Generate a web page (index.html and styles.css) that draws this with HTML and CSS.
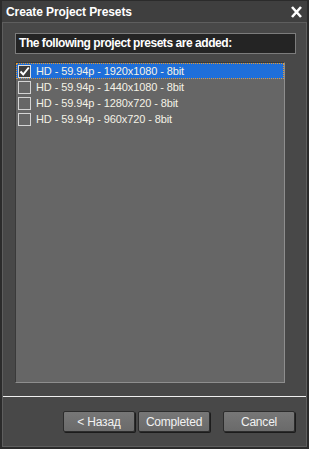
FILE: index.html
```html
<!DOCTYPE html>
<html>
<head>
    <link rel="stylesheet" href="styles.css">
</head>
<body>
    <div class="cpp-window">
        <div class="cpp-titlebar">
            <span class="cpp-title">Create Project Presets</span>
            <svg class="cpp-close" width="13" height="12" viewBox="0 0 13 12">
                <path d="M2 1 L11 11 M11 1 L2 11" stroke="#fff" stroke-width="2.6" fill="none"/>
            </svg>
        </div>

        <div class="cpp-body">
            <div class="cpp-heading">The following project presets are added:</div>

            <div class="cpp-list">
                <div class="cpp-row cpp-row-selected">
                    <span class="cpp-check cpp-check-on">
                        <svg width="11" height="11" viewBox="0 0 11 11">
                            <path d="M1.5 5.5 L4.2 8.5 L9.8 1.5" stroke="#fff" stroke-width="2" fill="none"/>
                        </svg>
                    </span>
                    <span class="cpp-label">HD - 59.94p - 1920x1080 - 8bit</span>
                </div>
                <div class="cpp-row">
                    <span class="cpp-check"></span>
                    <span class="cpp-label">HD - 59.94p - 1440x1080 - 8bit</span>
                </div>
                <div class="cpp-row">
                    <span class="cpp-check"></span>
                    <span class="cpp-label">HD - 59.94p - 1280x720 - 8bit</span>
                </div>
                <div class="cpp-row">
                    <span class="cpp-check"></span>
                    <span class="cpp-label">HD - 59.94p - 960x720 - 8bit</span>
                </div>
            </div>

            <div class="cpp-separator"></div>

            <div class="cpp-buttons">
                <button class="cpp-button">&lt; Назад</button>
                <button class="cpp-button">Completed</button>
                <button class="cpp-button cpp-button-cancel">Cancel</button>
            </div>
        </div>
    </div>
</body>
</html>
```

FILE: styles.css
```css
body {
    margin: 0;
    background: #2a2a2a;
    font-family: 'Liberation Sans', Arial, sans-serif;
}

.cpp-window {
    width: 309px;
    height: 449px;
    box-sizing: border-box;
    border: 2px solid #2b2b2b;
    border-top-width: 1px;
    background: #3e3e3e;
    display: flex;
    flex-direction: column;
}

.cpp-titlebar {
    height: 21px;
    flex-shrink: 0;
    display: flex;
    align-items: center;
    justify-content: space-between;
    padding: 0 4px 0 4px;
    background: #3f3f3f;
    border-bottom: 1px solid #5e5e5e;
}

.cpp-title {
    color: #fff;
    font-size: 12px;
    font-weight: bold;
    letter-spacing: -0.1px;
}

.cpp-close {
    display: block;
    margin-top: 1px;
}

.cpp-body {
    flex: 1;
    display: flex;
    flex-direction: column;
    background: #484848;
    border: 1px solid #5e5e5e;
    border-top: none;
    padding: 10px 0 14px 0;
}

.cpp-heading {
    margin: 0 10px 0 12px;
    height: 19px;
    line-height: 19px;
    padding-left: 3px;
    background: #242424;
    border: 1px solid #7c7c7c;
    color: #fff;
    font-size: 12px;
    font-weight: bold;
    letter-spacing: -0.45px;
}

.cpp-list {
    margin: 8px 21px 0 12px;
    height: 319px;
    background: #666;
    border: 1px solid #8e8e8e;
    border-top-color: #3a3a3a;
    border-left-color: #3a3a3a;
}

.cpp-row {
    height: 16px;
    display: flex;
    align-items: center;
    box-sizing: border-box;
    padding-left: 1px;
    border: 1px dotted transparent;
}

.cpp-row-selected {
    background: #1f6fd9;
    border-color: #e89a2c;
}

.cpp-check {
    width: 11px;
    height: 11px;
    border: 1px solid #d4d4d4;
    display: flex;
    align-items: center;
    justify-content: center;
    flex-shrink: 0;
}

.cpp-check-on {
    background: #3c3c3c;
    border-color: #e0e0e0;
}

.cpp-label {
    margin-left: 5px;
    color: #f4f2e6;
    font-size: 11px;
    letter-spacing: -0.1px;
    white-space: nowrap;
}

.cpp-separator {
    margin-top: 13px;
    height: 1px;
    background: #f0f0f0;
}

.cpp-buttons {
    display: flex;
    justify-content: flex-end;
    gap: 3px;
    margin-top: 14px;
    padding-right: 11px;
}

.cpp-button {
    width: 72px;
    height: 21px;
    padding: 0;
    background: linear-gradient(to bottom, #777, #6a6a6a);
    border: 1px solid #2c2c2c;
    border-radius: 2px;
    box-shadow: 1px 1px 0 #1c1c1c;
    color: #f2f2f2;
    font-family: 'Liberation Sans', Arial, sans-serif;
    font-size: 12px;
    letter-spacing: -0.2px;
}

.cpp-button-cancel {
    margin-left: 10px;
}
```
